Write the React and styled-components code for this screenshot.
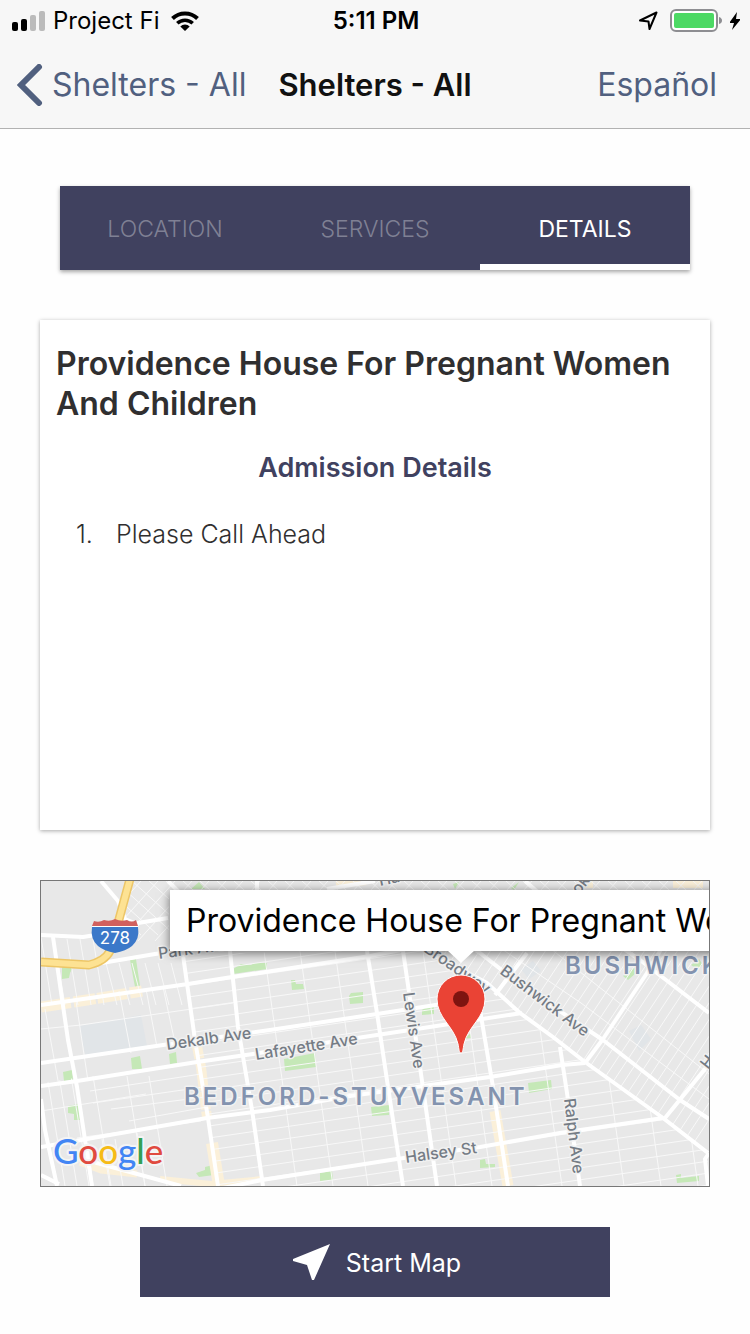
import React from "react";
import styled, { createGlobalStyle, css } from "styled-components";

const GlobalStyle = createGlobalStyle`
  *, *::before, *::after { box-sizing: border-box; }
  body {
    margin: 0;
    background: #fefefe;
    color: #000;
    font-family: Inter, "Liberation Sans", sans-serif;
    -webkit-font-smoothing: antialiased;
  }
  button { font-family: inherit; border: 0; padding: 0; background: none; cursor: pointer; }
  h1, h2, ol, p { margin: 0; padding: 0; }
`;

const NAVY = "#40415f";
const SLATE = "#51607f";

const Header = styled.header`
  background: #f7f7f7;
  border-bottom: 1px solid #b2b2b2;
`;

const StatusBar = styled.div`
  display: grid;
  grid-template-columns: 1fr auto 1fr;
  align-items: center;
  height: 41px;
  padding: 0 10px 0 12px;
  font-size: 24px;
  line-height: 29px;
`;

const StatusGroup = styled.div`
  display: flex;
  align-items: center;
  justify-content: ${(p) => (p.$end ? "flex-end" : "flex-start")};
  gap: ${(p) => p.$gap}px;
`;

const Clock = styled.time`
  font-weight: 600;
`;

const Glyph = styled.svg`
  display: block;
  flex: none;
`;

const NavBar = styled.nav`
  display: grid;
  grid-template-columns: 1fr auto 1fr;
  align-items: center;
  height: 87px;
  padding: 0 17px;
`;

const NavButton = styled.button`
  display: flex;
  align-items: center;
  gap: 9px;
  justify-self: ${(p) => (p.$end ? "end" : "start")};
  margin-right: ${(p) => (p.$end ? "16px" : "0")};
  color: ${SLATE};
  font-size: 32px;
  line-height: 42px;
  white-space: nowrap;
`;

const NavTitle = styled.div`
  color: #111;
  font-size: 31px;
  font-weight: 600;
  line-height: 42px;
  white-space: nowrap;
`;

const Main = styled.main`
  display: flex;
  flex-direction: column;
  padding: 57px 40px 37px;
`;

const Tabs = styled.div`
  display: grid;
  grid-template-columns: repeat(3, 1fr);
  margin: 0 20px 50px;
  background: ${NAVY};
  box-shadow: 0 2px 4px rgba(0, 0, 0, 0.35);
`;

const Tab = styled.button`
  height: 84px;
  border-bottom: 6px solid transparent;
  padding-top: 8px;
  color: #7f8094;
  font-size: 23px;
  font-weight: 300;
  line-height: 28px;
  ${(p) =>
    p.$active &&
    css`
      border-bottom-color: #fff;
      color: #fff;
      font-weight: 400;
    `}
`;

const Card = styled.section`
  min-height: 510px;
  margin-bottom: 50px;
  padding: 24px 16px;
  background: #fff;
  box-shadow: 0 1px 4px rgba(0, 0, 0, 0.34);
`;

const PlaceName = styled.h1`
  color: #302f30;
  font-size: 32px;
  font-weight: 600;
  line-height: 40px;
`;

const SectionTitle = styled.h2`
  margin-top: 24px;
  color: ${NAVY};
  font-size: 27px;
  font-weight: 600;
  line-height: 40px;
  text-align: center;
`;

const Notes = styled.ol`
  margin-top: 26px;
  padding-left: 20px;
  list-style: none;
`;

const Note = styled.li`
  display: grid;
  grid-template-columns: 40px 1fr;
  color: #302f30;
  font-size: 25px;
  font-weight: 300;
  line-height: 40px;
`;

const MapFrame = styled.section`
  position: relative;
  height: 307px;
  overflow: hidden;
  border: 1px solid #777;
  background: #e8e8e8;
`;

const MapCanvas = styled.svg`
  display: block;
  width: 100%;
  height: 100%;
`;

const Callout = styled.div`
  position: absolute;
  top: 9px;
  left: calc(50% - 205px);
  padding: 11px 16px 10px;
  background: #fff;
  box-shadow: 0 2px 10px rgba(0, 0, 0, 0.55);
  font-size: 32px;
  line-height: 40px;
  white-space: nowrap;
`;

const CalloutTip = styled.svg`
  position: absolute;
  top: 69px;
  left: calc(50% + 72px);
`;

const StartButton = styled.button`
  display: flex;
  align-items: center;
  justify-content: center;
  gap: 16px;
  height: 70px;
  margin: 40px 100px 0;
  padding: 1px 0 0 4px;
  background: ${NAVY};
  color: #fff;
  font-size: 25px;
  line-height: 40px;
`;

const MAJOR_ROADS = [
  "M0 54 L42 56 L79 50 L97 42 L127 37",
  "M49 84 L114 73 L200 60",
  "M0 124 L147 103 L191 96 L329 75 L370 67",
  "M0 182 L122 164 L229 149 L336 133 L440 117",
  "M0 205 L36 200 L156 181 L212 173 L316 157 L369 149 L481 132",
  "M0 266 L166 237 L229 229 L309 215 L382 205 L449 196 L521 184 L544 182",
  "M177 308 L221 299 L356 278 L439 266 L519 252 L622 237",
  "M0 294 L18 303",
  "M39 276 L56 282 L140 305",
  "M12 56 L27 159 L36 206 L51 305",
  "M0 218 L4 249 L16 305",
  "M142 74 L154 159 L167 237 L177 305",
  "M189 70 L197 146 L211 229 L222 305",
  "M326 70 L336 132 L347 206 L362 305",
  "M362 70 L379 186 L396 305",
  "M439 129 L452 206 L467 305",
  "M519 166 L526 212 L539 305",
  "M360 52 L379 67 L446 102 L479 132 L512 156 L544 181 L622 237 L667 272",
  "M668 272 L664 278 L667 305",
  "M420 60 L439 72 L480 104 L562 159 L639 219 L668 238",
  "M544 182 L562 158 L606 92 L625 60",
  "M454 114 L486 72",
  "M624 237 L668 183",
  "M580 66 L599 79 L668 132",
  "M60 0 L77 20 L84 38 L98 44",
  "M127 0 L139 12",
  "M216 0 V12",
  "M286 8 L334 0",
  "M484 0 L498 12",
];

const PARKS = [
  "M21 86 l11 0 l-3 6 l-1 5 l-7 1z",
  "M89 79 l6 -1 l4 27 l-5 1z",
  "M192 88 l8 -5 l10 1 l3 -2 l13 0 l0 6 l-34 5z",
  "M250 99 l4 0 l1 4 l7 0 l1 5 l-12 1z",
  "M308 115 l2 -3 l12 -1 l0 11 l-13 1z",
  "M381 129 l4 -3 l8 0 l0 7 l-12 1z",
  "M430 152 l0 5 l-8 1z",
  "M90 177 l9 -2 l2 13 l-10 0z",
  "M128 173 l7 -2 l1 11 l-7 1z",
  "M22 191 l9 -2 l1 10 l-9 1z",
  "M27 225 l10 -2 l2 16 l-6 0 l0 -6 l-6 -1z",
  "M243 178 l31 -6 l1 14 l-31 4z",
  "M330 226 l18 -2 l0 10 l-17 1z",
  "M487 202 l23 -3 l1 9 l-23 4z",
  "M279 292 l12 -2 l1 9 l-13 1z",
  "M155 292 l9 -3 l0 -3 l8 -2 l1 10 l-15 2z",
  "M439 279 l5 -1 l1 5 l9 0 l0 3 l-15 1z",
  "M635 294 l5 -1 l0 4 l18 -2 l0 5 l-22 2z",
  "M150 8 l8 -7 l6 7z",
  "M412 3 l6 -2 l-4 7z",
  "M470 7 l8 -6 l-5 8z",
  "M582 95 l12 -9 l1 6 l-8 7z",
  "M650 84 l8 -6 l4 6 l-6 4z",
];

const range = (start, end, step) => {
  const out = [];
  for (let v = start; v < end; v += step) out.push(v);
  return out;
};

const stroke = { fill: "none", strokeLinejoin: "round" };

function StreetMap() {
  return (
    <MapCanvas viewBox="0 0 668 305" preserveAspectRatio="xMidYMid slice" aria-hidden="true">
      <defs>
        <clipPath id="bedstuy">
          <path d="M128 74 L379 67 L446 102 L512 156 L622 237 L667 272 V305 H178 L142 74z" />
        </clipPath>
        <clipPath id="west">
          <path d="M0 202 L156 179 L177 305 H0z" />
        </clipPath>
        <clipPath id="bushwick">
          <path d="M379 67 L446 102 L512 156 L622 237 L668 272 V60 H370z" />
        </clipPath>
        <clipPath id="top">
          <path d="M78 42 L89 0 H668 V12 H128 V60 L90 66z" />
        </clipPath>
      </defs>
      <rect width="668" height="305" fill="#e8e8e8" />
      <path d="M38 145 L100 134 L106 165 L44 174z" fill="#e1e5e8" />
      <path d="M588 150 l12 -6 l10 14 l-12 12z M480 88 l12 -8 l8 10 l-12 8z" fill="#e1e5e8" />
      {PARKS.map((d) => (
        <path key={d} d={d} fill="#c5e8b7" />
      ))}

      <g {...stroke} stroke="#fbf0d9">
        <path d="M0 126 L46 119 L101 110" strokeWidth="11" strokeDasharray="30 3 22 2" />
        <path d="M155 160 L160 186 L166 237" strokeWidth="10" strokeDasharray="18 2 30 1" />
        <path d="M171 262 L178 305" strokeWidth="12" />
        <path d="M454 230 L467 305" strokeWidth="11" />
        <path d="M39 281 L60 289 L96 293" strokeWidth="7" />
        <path d="M119 298 L170 303 L222 298" strokeWidth="6" />
        <path d="M295 3 L325 0" strokeWidth="8" />
        <path d="M540 3 H552 M632 3 H662" strokeWidth="8" />
      </g>

      <g {...stroke} stroke="#f8f8f8" strokeWidth="1">
        <g clipPath="url(#bedstuy)">
          {range(-60, 420, 12).map((y) => (
            <path key={y} d={`M120 ${y + 48} L668 ${y - 32}`} />
          ))}
          {[116, 213, 249, 284, 372, 408, 478, 540, 577, 614].map((x) => (
            <path key={x} d={`M${x + 10} 70 L${x + 43} 305`} />
          ))}
        </g>
        <g clipPath="url(#west)">
          <path d="M0 230 L105 213 M49 210 L160 193 M52 222 L162 206 M70 228 L164 216 M88 240 L166 226 M36 257 L160 240" />
          {[2, 14, 26, 48, 82, 104].map((x) => (
            <path key={x} d={`M${x + 4} 195 L${x + 22} 305`} />
          ))}
          <path d="M47 262 L52 305 M61 258 L69 305 M74 258 L82 305 M96 252 L104 305" />
        </g>
        {range(6, 142, 13).map((x) => (
          <path key={x} d={`M${x - 6} ${x < 12 ? 56 : x < 60 ? 58 : 82} L${x + 5} 124`} />
        ))}
        <path d="M0 148 L40 144 L192 122 M4 128 L18 205 M35 120 L47 200 M78 110 L90 172 M105 108 L116 166 M122 106 L134 162" />
        <g clipPath="url(#bushwick)">
          {range(390, 790, 11).map((x) => (
            <path key={x} d={`M${x} 60 L${x - 140} 272`} />
          ))}
          <path d="M500 60 L668 193 M452 62 L540 122 L668 218" />
        </g>
        <g clipPath="url(#top)">
          {range(40, 700, 17).map((x) => (
            <path key={x} d={`M${x} 0 l60 54 M${x + 60} 0 l-54 60`} />
          ))}
        </g>
      </g>

      <g {...stroke} stroke="#fff" strokeWidth="4">
        {MAJOR_ROADS.map((d) => (
          <path key={d} d={d} />
        ))}
      </g>

      <g {...stroke}>
        <path d="M89 -2 L77 42 L69 70 Q64 80 48 84 L0 81" stroke="#edc667" strokeWidth="9" />
        <path d="M89 -2 L77 42 L69 70 Q64 80 48 84 L0 81" stroke="#fde293" strokeWidth="6" />
      </g>

      <path d="M53 40 Q58 42 63 39 Q69 41 74 38 Q80 41 86 39 Q91 42 95 39 L97 45 H51z" fill="#d1605e" />
      <path d="M51 46 H97 Q99 58 91 65 Q85 70 74 72 Q63 70 57 65 Q49 58 51 46z" fill="#3b78c9" />
      <path d="M51 45.500 H97" stroke="#fff" strokeWidth="1" />

      <g fill="#757c85" fontSize="16" fontWeight="500" stroke="#f1f1f1" strokeWidth="3" paintOrder="stroke" strokeLinejoin="round">
        <text transform="translate(118 78) rotate(-8)">Park Ave</text>
        <text transform="translate(126 169) rotate(-8)">Dekalb Ave</text>
        <text transform="translate(215 179) rotate(-9)">Lafayette Ave</text>
        <text transform="translate(365 282) rotate(-8)">Halsey St</text>
        <text transform="translate(362 112) rotate(82)">Lewis Ave</text>
        <text transform="translate(523 218) rotate(83)">Ralph Ave</text>
        <text transform="translate(458 92) rotate(37)">Bushwick Ave</text>
        <text transform="translate(382 70) rotate(35)">Broadway</text>
        <text transform="translate(339 5) rotate(-12)">Ha</text>
        <text transform="translate(538 14) rotate(-52)">oka</text>
        <text transform="translate(667 189) rotate(-52)">H</text>
      </g>
      <g fill="#8393af" fontSize="24" fontWeight="600" letterSpacing="3" stroke="#f1f1f1" strokeWidth="3" paintOrder="stroke" strokeLinejoin="round">
        <text x="143" y="224">BEDFORD-STUYVESANT</text>
        <text x="524" y="93">BUSHWICK</text>
      </g>
      <text x="74" y="63" fill="#fff" fontSize="17" textAnchor="middle">278</text>

      <text x="12" y="283" fontFamily="Lato, sans-serif" fontSize="35" fontWeight="500" stroke="#f4f4f4" strokeWidth="4" paintOrder="stroke" strokeLinejoin="round">
        <tspan fill="#4285f4">G</tspan>
        <tspan fill="#e04a3f">o</tspan>
        <tspan fill="#f6bb16">o</tspan>
        <tspan fill="#4285f4">g</tspan>
        <tspan fill="#34a054">l</tspan>
        <tspan fill="#e04a3f">e</tspan>
      </text>

      <path
        d="M420 172 C418 172 418 168 417 163 C413 145 396 137 396 118 A24 24 0 0 1 444 118 C444 137 427 145 423 163 C422 168 422 172 420 172z"
        fill="#ea4335"
        stroke="#fff"
        strokeWidth="1"
      />
      <circle cx="420" cy="118" r="8" fill="#7e1410" />
    </MapCanvas>
  );
}

const TABS = ["LOCATION", "SERVICES", "DETAILS"];

export default function App() {
  return (
    <>
      <GlobalStyle />
      <Header>
        <StatusBar>
          <StatusGroup $gap={8}>
            <Glyph width="33" height="20" viewBox="0 0 33 20" aria-label="Signal">
              <rect x="0" y="11" width="6" height="9" rx="2" />
              <rect x="9" y="8" width="6" height="12" rx="2" />
              <rect x="18" y="4" width="6" height="16" rx="2" fill="#bbb" />
              <rect x="27" y="0" width="6" height="20" rx="2" fill="#bbb" />
            </Glyph>
            <span>Project Fi</span>
            <Glyph width="36" height="20" viewBox="-4 0 36 20" aria-label="Wi-Fi">
              <g fill="none" stroke="#000" strokeWidth="4">
                <path d="M1.500 7.500 A18 18 0 0 1 26.500 7.500" />
                <path d="M6.300 12.300 A11 11 0 0 1 21.700 12.300" strokeWidth="3.500" />
              </g>
              <path d="M14 20 L9.300 15.400 A6.500 6.500 0 0 1 18.700 15.400z" />
            </Glyph>
          </StatusGroup>
          <Clock>5:11 PM</Clock>
          <StatusGroup $end $gap={8}>
            <Glyph width="24" height="20" viewBox="0 0 24 20" aria-label="Location in use">
              <path d="M3 9.500 L19.500 1.500 L12.500 18 L11.500 10.500z" fill="none" stroke="#000" strokeWidth="2" strokeLinejoin="round" />
            </Glyph>
            <Glyph width="53" height="23" viewBox="0 0 53 23" aria-label="Battery">
              <rect x="2" y="1" width="46" height="21" rx="5" fill="#fff" stroke="#8e8e92" strokeWidth="2" />
              <rect x="5" y="4" width="40" height="15" rx="2" fill="#4cd964" />
              <path d="M50 8 Q53 9 53 11.500 Q53 14 50 15z" fill="#8e8e92" />
            </Glyph>
            <Glyph width="10" height="20" viewBox="1 0 10 20" aria-label="Charging">
              <path d="M8 1 L0 12 H5 L3 19 L12 8 H7z" />
            </Glyph>
          </StatusGroup>
        </StatusBar>
        <NavBar>
          <NavButton type="button">
            <Glyph width="26" height="42" viewBox="0 0 26 42" aria-hidden="true">
              <path d="M22 3 L4 21 L22 39" fill="none" stroke={SLATE} strokeWidth="6" strokeLinecap="round" />
            </Glyph>
            Shelters - All
          </NavButton>
          <NavTitle>Shelters - All</NavTitle>
          <NavButton type="button" $end>
            Español
          </NavButton>
        </NavBar>
      </Header>
      <Main>
        <Tabs role="tablist">
          {TABS.map((name) => (
            <Tab key={name} type="button" role="tab" aria-selected={name === "DETAILS"} $active={name === "DETAILS"}>
              {name}
            </Tab>
          ))}
        </Tabs>
        <Card role="tabpanel">
          <PlaceName>Providence House For Pregnant Women And Children</PlaceName>
          <SectionTitle>Admission Details</SectionTitle>
          <Notes>
            <Note>
              <span>1.</span>
              <span>Please Call Ahead</span>
            </Note>
          </Notes>
        </Card>
        <MapFrame aria-label="Map">
          <StreetMap />
          <Callout>Providence House For Pregnant Women And Children</Callout>
          <CalloutTip width="28" height="14" viewBox="0 0 28 14" aria-hidden="true">
            <path d="M0 0 H28 L14 13z" fill="#fff" />
          </CalloutTip>
        </MapFrame>
        <StartButton type="button">
          <Glyph width="37" height="37" viewBox="0 0 37 37" aria-hidden="true">
            <path d="M37 0 L21 36 H19 L14 21 L0 17 V15z" fill="#fff" />
          </Glyph>
          Start Map
        </StartButton>
      </Main>
    </>
  );
}
